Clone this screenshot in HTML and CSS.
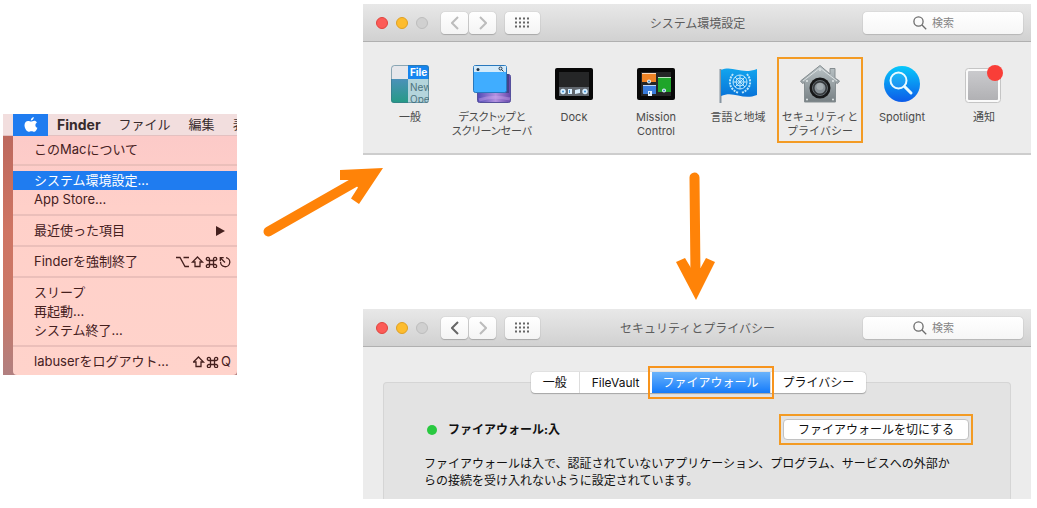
FILE: index.html
```
<!DOCTYPE html>
<html lang="ja">
<head>
<meta charset="utf-8">
<title>ファイアウォールの設定手順</title>
<link rel="stylesheet" href="styles.css">
</head>
<body>
<main class="guide">
  <section class="desktop" aria-label="アップルメニュー">
    <nav class="menubar">
      <button class="apple" aria-label="アップルメニュー"><svg width="14" height="16" viewBox="0 0 14 16"><path fill="#fff" d="M9.8 0c.2 1.9-1.4 3.6-3 3.6C6.600 2 8.200.300 9.800 0zM12.900 5.400c-2.300 1.500-1.800 4.500.500 5.400-.600 1.900-1.900 4-3.200 4-.900 0-1.500-.600-2.700-.600s-1.900.600-2.800.600C2.600 14.800.500 11 .500 8.300c0-2.900 1.800-4.400 3.600-4.400 1.200 0 2.100.700 2.900.700s1.900-.800 3.300-.800c1 0 2 .600 2.600 1.600z"/></svg></button>
      <button class="bar-item bar-app">Finder</button>
      <button class="bar-item">ファイル</button>
      <button class="bar-item">編集</button>
      <button class="bar-item">表</button>
    </nav>
    <div class="menu">
      <button class="item">このMacについて</button>
      <hr class="sep">
      <button class="item selected">システム環境設定...</button>
      <button class="item">App Store...</button>
      <hr class="sep">
      <button class="item">最近使った項目<svg class="more" width="9" height="10"><path d="M0 0L9 5L0 10z"/></svg></button>
      <hr class="sep">
      <button class="item">Finderを強制終了
        <svg class="keys" width="55" height="12" viewBox="0 0 55 12"><path d="M0 1.500h4L9 10.500h4M7.500 1.500H13M21.500 1L26.500 6H24v4.500h-5V6h-2.500zM33.500 4.500v4M37.500 4.500v4M33.500 4.500h4M33.500 8.500h4M33.500 4.500h-1.500a1.600 1.600 0 1 1 1.500-1.500zM37.500 4.500V3a1.600 1.600 0 1 1 1.500 1.500zM33.500 8.500V10a1.600 1.600 0 1 1-1.500-1.500zM37.500 8.500H39a1.600 1.600 0 1 1-1.500 1.500zM50 1.600a4.600 4.600 0 1 1-5.400 4.200M49 6.500L44.500 2M44.300 5V1.700h3.400"/></svg></button>
      <hr class="sep">
      <button class="item">スリープ</button>
      <button class="item">再起動...</button>
      <button class="item">システム終了...</button>
      <hr class="sep">
      <button class="item">labuserをログアウト...
        <span class="combo"><svg width="26" height="12" viewBox="16 0 26 12"><path d="M21.500 1L26.500 6H24v4.500h-5V6h-2.500zM33.500 4.500v4M37.500 4.500v4M33.500 4.500h4M33.500 8.500h4M33.500 4.500h-1.500a1.600 1.600 0 1 1 1.500-1.500zM37.500 4.500V3a1.600 1.600 0 1 1 1.500 1.500zM33.500 8.500V10a1.600 1.600 0 1 1-1.500-1.500zM37.500 8.500H39a1.600 1.600 0 1 1-1.500 1.500z"/></svg>Q</span></button>
    </div>
  </section>

  <svg class="arrow arrow-right" width="126" height="80" viewBox="237 160 126 80" aria-hidden="true"><path class="shaft" d="M268.500 231.500L364 177"/><path class="head" d="M340 170l43-2-24 36-8-5.500 7-11-7-7.500h-11z"/></svg>

  <div class="windows">
    <section class="window">
      <header class="toolbar">
        <div class="tools">
          <span class="lights"><i class="light red"></i><i class="light yellow"></i><i class="light off"></i></span>
          <span class="nav">
            <button class="tool dim" aria-label="戻る"><svg width="8" height="14"><path d="M7 1L1 7l6 6"/></svg></button>
            <button class="tool dim" aria-label="進む"><svg width="8" height="14"><path d="M1 1l6 6-6 6"/></svg></button>
          </span>
          <button class="tool all" aria-label="すべてを表示"><svg width="15" height="11" viewBox="0 0 15 11"><path class="dots" d="M0 1.500h15M0 5.500h15M0 9.500h15"/></svg></button>
        </div>
        <h1 class="title">システム環境設定</h1>
        <label class="search"><svg width="14" height="14"><circle cx="5.500" cy="5.500" r="4.600"/><path d="M9 9l4.200 4.200"/></svg><input type="search" placeholder="検索" aria-label="検索"></label>
      </header>
      <div class="prefs">
        <button class="pref"><svg width="40" height="40" viewBox="0 0 40 40">
          <defs><linearGradient id="teal" x2="0" y2="1"><stop stop-color="#4b91b9"/><stop offset="1" stop-color="#249b83"/></linearGradient><clipPath id="gen"><rect x="1" y="1" width="38" height="38" rx="3"/></clipPath></defs>
          <g clip-path="url(#gen)"><path fill="#e6e7eb" d="M0 0h18v15H0z"/><path fill="#1685ef" d="M18 0h22v15H18z"/><path fill="url(#teal)" d="M0 15h18v25H0z"/><path fill="#b4d5dc" d="M18 15h22v25H18z"/>
          <text class="ico-file" x="20" y="12">File</text><text class="ico-text" x="20" y="27">New</text><text class="ico-text" x="20" y="39">Ope</text></g><rect x="1.500" y="1.500" width="37" height="37" rx="3" fill="none" stroke="#3d7187" stroke-opacity=".55"/></svg><span>一般</span></button>
        <button class="pref"><svg width="40" height="40" viewBox="0 0 40 40">
          <defs><linearGradient id="nebula"><stop stop-color="#504ab5"/><stop offset=".55" stop-color="#b391e0"/><stop offset="1" stop-color="#6547aa"/></linearGradient></defs>
          <rect x="5.500" y="10.500" width="33" height="28" rx="2" fill="url(#nebula)" stroke="#56509c"/><path d="M7 36q14-5 31-1" fill="none" stroke="#d2aaf0" stroke-width="3" opacity=".4"/><path fill="#26386e" opacity=".6" d="M3 27h32V10h2v19H4z"/><rect x="1.500" y="1.500" width="33" height="27" rx="2" fill="#40adff" stroke="#2878bd"/><path fill="#d3eafa" d="M2 2h32v6H2z"/><circle cx="6" cy="5.500" r="1.500" fill="#234"/><circle cx="28.500" cy="4.500" r="1.500" fill="none" stroke="#234"/><path d="M29.500 5.500l2 2" stroke="#234"/></svg><span class="kana">デスクトップと<br>スクリーンセーバ</span></button>
        <button class="pref"><svg width="40" height="40" viewBox="0 0 40 40">
          <rect x="1" y="4" width="38" height="32" rx="2" fill="#080808"/><path fill="#252627" d="M5 8h30v15H5z"/><path fill="#60666d" d="M5 23h30v9H5z"/><g fill="#d9efff"><circle cx="9" cy="27.500" r="2.700"/><path d="M14 25h4v5h-4zM21 26l5-1v4l-5 1z"/><circle cx="31" cy="27.500" r="2.700"/></g><g fill="#3e91d3"><circle cx="9" cy="27.500" r="1"/><circle cx="31" cy="27.500" r="1"/><path d="M15 26h1v3h-1z"/></g></svg><span>Dock</span></button>
        <button class="pref"><svg width="40" height="40" viewBox="0 0 40 40">
          <rect x="1" y="4" width="38" height="32" rx="2" fill="#080808"/><path fill="#252627" d="M5 8h30v24H5z"/><path fill="#ef8426" d="M6 9h14v9H6z"/><path fill="#3a7ddd" d="M7 21h13v9H7z"/><path fill="#1fa52a" d="M22 13h13v15H22z"/><path d="M6 9.500h14M7 21.500h13M22 13.500h13" stroke="#fff" stroke-opacity=".7"/><g fill="#e7f4ff"><circle cx="13" cy="17.500" r="2"/><circle cx="28" cy="26.500" r="2"/><path d="M12 27h4v5h-4z"/></g><g fill="#3f86bd"><circle cx="13" cy="17.500" r="1"/><circle cx="28" cy="26.500" r="1"/><path d="M13 28h1v2h-1z"/></g></svg><span>Mission<br>Control</span></button>
        <button class="pref"><svg width="40" height="40" viewBox="0 0 40 40">
          <defs><linearGradient id="flag" x2="0" y2="1"><stop stop-color="#12a5ee"/><stop offset="1" stop-color="#0873d8"/></linearGradient></defs>
          <path d="M2.500 5v34" stroke="#8795a1" stroke-width="2"/><path fill="url(#flag)" d="M3 6c12-5 20 5 36-1v26c-15 6-23-5-36 1z"/><g fill="none" stroke="#bce6fb"><circle cx="22" cy="18" r="7"/><circle cx="22" cy="18" r="4"/><path d="M15 18h14M22 11v14M17 13l10 10M27 13L17 23"/><path stroke-width="2" stroke-dasharray="2 1" d="M15 10c-6 8-3 16 6 19M29 10c6 8 3 16-6 19"/></g></svg><span>言語と地域</span></button>
        <button class="pref marked"><svg width="40" height="40" viewBox="0 0 40 40">
          <defs><linearGradient id="metal" x2="0" y2="1"><stop stop-color="#bbc4c7"/><stop offset="1" stop-color="#778084"/></linearGradient></defs>
          <path fill="url(#metal)" stroke="#858d90" d="M20 1.500L30 10V4.500h5V14l4.500 3-2 2.500-2-1V38h-31V18.500l-2 1-2-2.500z"/><path d="M3 17L20 4l17 13" fill="none" stroke="#dce1e2"/><circle cx="20" cy="24" r="10.500" fill="#171819"/><circle cx="20" cy="24" r="7.500" fill="#34383b" stroke="#626a6f"/><circle cx="20" cy="24" r="5.500" fill="#899298"/><circle cx="20" cy="22.500" r="3.500" fill="#a5adb1"/><g fill="#e1e6e7"><circle cx="20" cy="6" r="1"/><circle cx="7" cy="17" r="1"/><circle cx="33" cy="17" r="1"/><circle cx="7" cy="35.500" r="1"/><circle cx="33" cy="35.500" r="1"/></g></svg><span>セキュリティと<br>プライバシー</span></button>
        <button class="pref"><svg width="40" height="40" viewBox="0 0 40 40">
          <defs><linearGradient id="spot" x2="0" y2="1"><stop stop-color="#08c8fb"/><stop offset="1" stop-color="#0c5be9"/></linearGradient></defs>
          <circle cx="20" cy="20" r="18" fill="url(#spot)"/><circle cx="16.500" cy="16.500" r="8" fill="#fff" fill-opacity=".08" stroke="#e9faff" stroke-width="2"/><path d="M22.500 22.500L29 29" stroke="#e9faff" stroke-width="3" stroke-linecap="round"/></svg><span>Spotlight</span></button>
        <button class="pref"><svg width="40" height="40" viewBox="0 0 40 40">
          <defs><linearGradient id="note" x2="0" y2="1"><stop stop-color="#cacacd"/><stop offset="1" stop-color="#b1b1b4"/></linearGradient></defs>
          <rect x="1.500" y="4.500" width="35" height="34" rx="3" fill="#fafafa" stroke="#c5c5c5"/><rect x="4" y="7" width="30" height="29" rx="1" fill="url(#note)"/><circle cx="31" cy="9" r="8" fill="#f93e38"/></svg><span>通知</span></button>
      </div>
    </section>

    <svg class="arrow arrow-down" width="668" height="154" viewBox="363 155 668 154" aria-hidden="true"><path class="shaft" d="M694.500 177.500L695.500 276"/><path class="head" d="M676 262l9-4 6 10h9.500l5.500-10 9 4-19 38z"/></svg>

    <section class="window">
      <header class="toolbar">
        <div class="tools">
          <span class="lights"><i class="light red"></i><i class="light yellow"></i><i class="light off"></i></span>
          <span class="nav">
            <button class="tool" aria-label="戻る"><svg width="8" height="14"><path d="M7 1L1 7l6 6"/></svg></button>
            <button class="tool dim" aria-label="進む"><svg width="8" height="14"><path d="M1 1l6 6-6 6"/></svg></button>
          </span>
          <button class="tool all" aria-label="すべてを表示"><svg width="15" height="11" viewBox="0 0 15 11"><path class="dots" d="M0 1.500h15M0 5.500h15M0 9.500h15"/></svg></button>
        </div>
        <h1 class="title">セキュリティとプライバシー</h1>
        <label class="search"><svg width="14" height="14"><circle cx="5.500" cy="5.500" r="4.600"/><path d="M9 9l4.200 4.200"/></svg><input type="search" placeholder="検索" aria-label="検索"></label>
      </header>
      <div class="content">
        <div class="panel">
          <div class="tabs" role="tablist">
            <button class="tab" role="tab">一般</button>
            <button class="tab" role="tab">FileVault</button>
            <button class="tab current" role="tab" aria-selected="true">ファイアウォール</button>
            <button class="tab" role="tab">プライバシー</button>
          </div>
          <div class="status">
            <i class="dot"></i><strong>ファイアウォール:入</strong>
            <div class="callout"><button class="action">ファイアウォールを切にする</button></div>
          </div>
          <p class="note">ファイアウォールは入で、認証されていないアプリケーション、プログラム、サービスへの外部からの接続を受け入れないように設定されています。</p>
        </div>
      </div>
    </section>
  </div>
</main>
</body>
</html>
```
FILE: styles.css
```
* { box-sizing: border-box; }
body {
  margin: 0;
  background: #fff;
  font: 12px/16px Inter, "Noto Sans CJK JP", sans-serif;
  color: #111;
}
button, input { font: inherit; color: inherit; }
button { margin: 0; padding: 0; border: 0; background: none; white-space: nowrap; }
.guide {
  display: grid;
  grid-template-columns: 234px 126px minmax(0, 1fr);
  align-items: start;
  padding: 4px 6px 9px 3px;
}

/* Apple menu */
.desktop {
  margin-top: 110px;
  overflow: hidden;
  background: linear-gradient(#b9665c, #cf7563 45%, #c97868 75%, #b18080);
  font-size: 13px;
  line-height: 19px;
  color: #45201e;
}
.menubar {
  display: flex;
  height: 22px;
  padding-left: 10px;
  background: #f2dede;
  border-bottom: 1px solid #e3c1c1;
  color: #372b2c;
}
.apple {
  display: flex;
  flex: none;
  width: 35px;
  height: 22px;
  align-items: center;
  justify-content: center;
  background: #1f7cf0;
}
.bar-item { flex: none; margin-right: 9px; padding-left: 9px; }
.bar-app { font-size: 14px; font-weight: 700; }
.menu {
  margin-left: 10px;
  padding: 4px 0;
  border-radius: 0 0 4px 4px;
  background: linear-gradient(#fccac8, #ffd0c9 30%, #ffd3cb);
}
.item {
  display: flex;
  align-items: center;
  justify-content: space-between;
  width: 100%;
  height: 19px;
  padding: 0 6px 0 21px;
}
.item.selected { background: #1f7cf0; color: #fff; }
.item svg { fill: none; stroke: #45201e; stroke-width: 1.300; }
.item .more { margin-right: 6px; fill: #45201e; stroke: none; }
.combo { display: flex; align-items: center; gap: 2px; }
.sep { height: 2px; margin: 5px 0; border: 0; background: #ebbfba; }

/* Arrows */
.arrow { display: block; overflow: visible; }
.arrow-right { margin-top: 156px; }
.arrow-down { max-width: 100%; }
.shaft { fill: none; stroke: #ff8308; stroke-width: 10; stroke-linecap: round; }
.head { fill: #ff8308; }

/* Windows */
.window { background: #ececec; }
.toolbar {
  display: grid;
  grid-template-columns: 1fr auto 1fr;
  align-items: center;
  height: 38px;
  padding: 0 8px 0 13px;
  background: linear-gradient(#e8e8e8, #d1d1d1);
  border-bottom: 1px solid #b0b0b0;
}
.tools { display: flex; align-items: center; }
.lights { display: flex; gap: 8px; margin-right: 13px; }
.light { width: 12px; height: 12px; border-radius: 50%; border: 1px solid #e0443e; background: #fc5b57; }
.light.yellow { border-color: #dfa023; background: #fdbc2e; }
.light.off { border-color: #bdbdbd; background: #d0d0d0; }
.nav { display: flex; gap: 1px; margin-right: 9px; }
.tool {
  display: flex;
  align-items: center;
  justify-content: center;
  width: 27px;
  height: 22px;
  border-radius: 4px;
  background: linear-gradient(#fff, #f4f4f4);
  box-shadow: 0 0 1px #999, 0 1px 1px #aaa;
}
.tool.all { width: 35px; }
.tool svg { fill: none; stroke: #666; stroke-width: 2; }
.tool.dim svg { stroke: #bcbcbc; }
.tool .dots { stroke-dasharray: 2 2; }
.title { margin: 0; padding: 2px 4px 0 0; font-size: 12px; font-weight: 400; color: #5d5d5d; }
.search {
  display: flex;
  align-items: center;
  justify-self: end;
  gap: 5px;
  width: 160px;
  height: 22px;
  padding-left: 50px;
  border-radius: 4px;
  background: linear-gradient(#fff, #f6f6f6);
  box-shadow: 0 0 1px #999, 0 1px 1px #bbb;
}
.search svg { flex: none; fill: none; stroke: #6c6c6c; stroke-width: 1.300; }
.search input { flex: 1; min-width: 0; padding: 0; border: 0; outline: 0; background: none; font-size: 11px; }
.search input::placeholder { color: #858585; opacity: 1; }

/* Preference icons */
.prefs {
  display: grid;
  grid-template-columns: repeat(8, minmax(0, 1fr));
  align-items: start;
  padding: 15px 6px 10px;
  border-bottom: 2px solid #cdcdcd;
}
.pref {
  display: flex;
  flex-direction: column;
  align-items: center;
  gap: 6px;
  height: 86px;
  padding: 7px 0 5px;
  font-size: 11px;
  line-height: 14px;
  color: #4b4b4b;
}
.pref svg { flex: none; }
.pref.marked { margin: 0 -2px; outline: 2px solid #f39b24; outline-offset: -2px; }
.kana { font-feature-settings: "palt"; }
.ico-file { fill: #fff; font-size: 10px; font-weight: 700; }
.ico-text { fill: #4d747f; font-size: 10px; }

/* Firewall settings */
.content { padding: 35px 20px 0; }
.panel {
  padding: 0 37px 10px 40px;
  border: 1px solid #d5d5d5;
  border-bottom: 0;
  border-radius: 4px 4px 0 0;
  background: #e3e3e3;
}
.tabs {
  display: flex;
  width: max-content;
  height: 21px;
  margin: -11px auto 0;
  border-radius: 4px;
  background: #fff;
  box-shadow: 0 0 1px #888, 0 1px 1px #aaa;
}
.tab { position: relative; padding: 0 12px; }
.tab + .tab { border-left: 1px solid #ddd; }
.tab.current { padding: 0 11px; border: 0; background: linear-gradient(#6ab3fb, #147bfb); color: #fff; }
.tab.current::after { content: ""; position: absolute; inset: -6px -4px; border: 2px solid #f7941d; }
.status { display: flex; align-items: center; margin-top: 21px; }
.dot { width: 10px; height: 10px; margin: 0 11px 0 3px; border-radius: 50%; background: #29c940; }
.callout { margin-left: auto; padding: 3px 2px; border: 2px solid #f39b24; }
.action {
  display: block;
  height: 21px;
  padding: 0 14px;
  border: 1px solid #c2c2c2;
  border-radius: 4px;
  background: #fff;
}
.note { margin: 10px 16px 0 0; line-height: 17px; word-break: break-all; }
```
